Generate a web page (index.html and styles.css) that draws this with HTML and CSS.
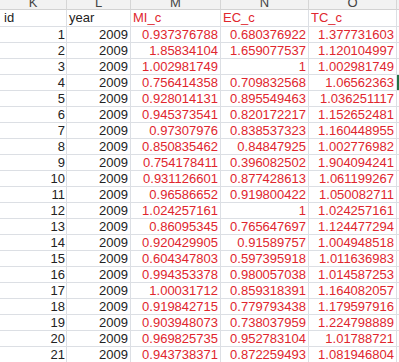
FILE: index.html
```html
<!DOCTYPE html>
<html>
<head>
<meta charset="utf-8">
<link rel="stylesheet" href="styles.css">
</head>
<body>
<div class="sheet">
  <div class="cell col-head">K</div><div class="cell col-head">L</div><div class="cell col-head">M</div><div class="cell col-head">N</div><div class="cell col-head">O</div><div class="cell col-head edge"></div>

  <div class="cell title first">id</div><div class="cell title">year</div><div class="cell title red">MI_c</div><div class="cell title red">EC_c</div><div class="cell title red">TC_c</div><div class="cell edge"></div>

  <div class="cell num first">1</div><div class="cell num">2009</div><div class="cell num red">0.937376788</div><div class="cell num red">0.680376922</div><div class="cell num red">1.377731603</div><div class="cell edge"></div>
  <div class="cell num first">2</div><div class="cell num">2009</div><div class="cell num red">1.85834104</div><div class="cell num red">1.659077537</div><div class="cell num red">1.120104997</div><div class="cell edge"></div>
  <div class="cell num first">3</div><div class="cell num">2009</div><div class="cell num red">1.002981749</div><div class="cell num red">1</div><div class="cell num red">1.002981749</div><div class="cell edge"></div>
  <div class="cell num first">4</div><div class="cell num">2009</div><div class="cell num red">0.756414358</div><div class="cell num red">0.709832568</div><div class="cell num red">1.06562363</div><div class="cell edge selected"></div>
  <div class="cell num first">5</div><div class="cell num">2009</div><div class="cell num red">0.928014131</div><div class="cell num red">0.895549463</div><div class="cell num red">1.036251117</div><div class="cell edge"></div>
  <div class="cell num first">6</div><div class="cell num">2009</div><div class="cell num red">0.945373541</div><div class="cell num red">0.820172217</div><div class="cell num red">1.152652481</div><div class="cell edge"></div>
  <div class="cell num first">7</div><div class="cell num">2009</div><div class="cell num red">0.97307976</div><div class="cell num red">0.838537323</div><div class="cell num red">1.160448955</div><div class="cell edge"></div>
  <div class="cell num first">8</div><div class="cell num">2009</div><div class="cell num red">0.850835462</div><div class="cell num red">0.84847925</div><div class="cell num red">1.002776982</div><div class="cell edge"></div>
  <div class="cell num first">9</div><div class="cell num">2009</div><div class="cell num red">0.754178411</div><div class="cell num red">0.396082502</div><div class="cell num red">1.904094241</div><div class="cell edge"></div>
  <div class="cell num first">10</div><div class="cell num">2009</div><div class="cell num red">0.931126601</div><div class="cell num red">0.877428613</div><div class="cell num red">1.061199267</div><div class="cell edge"></div>
  <div class="cell num first">11</div><div class="cell num">2009</div><div class="cell num red">0.96586652</div><div class="cell num red">0.919800422</div><div class="cell num red">1.050082711</div><div class="cell edge"></div>
  <div class="cell num first">12</div><div class="cell num">2009</div><div class="cell num red">1.024257161</div><div class="cell num red">1</div><div class="cell num red">1.024257161</div><div class="cell edge"></div>
  <div class="cell num first">13</div><div class="cell num">2009</div><div class="cell num red">0.86095345</div><div class="cell num red">0.765647697</div><div class="cell num red">1.124477294</div><div class="cell edge"></div>
  <div class="cell num first">14</div><div class="cell num">2009</div><div class="cell num red">0.920429905</div><div class="cell num red">0.91589757</div><div class="cell num red">1.004948518</div><div class="cell edge"></div>
  <div class="cell num first">15</div><div class="cell num">2009</div><div class="cell num red">0.604347803</div><div class="cell num red">0.597395918</div><div class="cell num red">1.011636983</div><div class="cell edge"></div>
  <div class="cell num first">16</div><div class="cell num">2009</div><div class="cell num red">0.994353378</div><div class="cell num red">0.980057038</div><div class="cell num red">1.014587253</div><div class="cell edge"></div>
  <div class="cell num first">17</div><div class="cell num">2009</div><div class="cell num red">1.00031712</div><div class="cell num red">0.859318391</div><div class="cell num red">1.164082057</div><div class="cell edge"></div>
  <div class="cell num first">18</div><div class="cell num">2009</div><div class="cell num red">0.919842715</div><div class="cell num red">0.779793438</div><div class="cell num red">1.179597916</div><div class="cell edge"></div>
  <div class="cell num first">19</div><div class="cell num">2009</div><div class="cell num red">0.903948073</div><div class="cell num red">0.738037959</div><div class="cell num red">1.224798889</div><div class="cell edge"></div>
  <div class="cell num first">20</div><div class="cell num">2009</div><div class="cell num red">0.969825735</div><div class="cell num red">0.952783104</div><div class="cell num red">1.01788721</div><div class="cell edge"></div>
  <div class="cell num first">21</div><div class="cell num">2009</div><div class="cell num red">0.943738371</div><div class="cell num red">0.872259493</div><div class="cell num red">1.081946804</div><div class="cell edge"></div>
</div>
</body>
</html>
```

FILE: styles.css
```css
html, body {
  margin: 0;
  padding: 0;
  background: #ffffff;
  overflow: hidden;
}

.sheet {
  display: grid;
  grid-template-columns: 67px 64px 90px 88px 88px 2px;
  grid-template-rows: 10px 17px repeat(21, 16px);
  font-family: "Liberation Sans", Arial, sans-serif;
  font-size: 13px;
  color: #222222;
  width: 399px;
}

.cell {
  box-sizing: border-box;
  border-right: 1px solid #dcdfe4;
  border-bottom: 1px solid #dcdfe4;
  padding: 0 2px;
  white-space: nowrap;
  overflow: hidden;
  line-height: 15px;
}

.edge {
  border-right: none;
  padding: 0;
}

.col-head {
  background: #f2f2f2;
  color: #444444;
  text-align: center;
  line-height: 5px;
  border-right-color: #d6d6d6;
  border-bottom-color: #d2d2d2;
}

.title {
  line-height: 16px;
  text-align: left;
}

.first {
  padding-left: 4px;
}

.num {
  text-align: right;
  padding-right: 2px;
}

.num.first {
  padding-right: 1px;
}

.red {
  color: #e0262e;
}

.selected {
  box-shadow: inset 2px 0 0 #217346;
}
```
